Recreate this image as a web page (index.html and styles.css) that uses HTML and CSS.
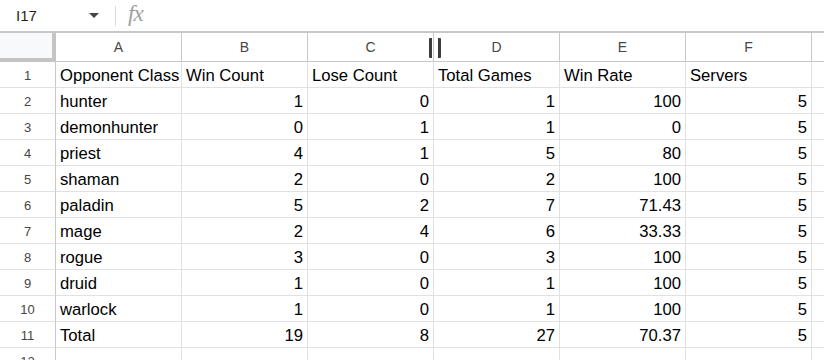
FILE: index.html
```html
<!DOCTYPE html>
<html>
<head>
<meta charset="utf-8">
<link rel="stylesheet" href="styles.css">
</head>
<body>
<div class="toolbar">
  <div class="namebox">I17</div>
  <svg class="caret" width="10" height="6" viewBox="0 0 10 6"><path d="M0 0h10L5 5z" fill="#444"/></svg>
  <div class="sep"></div>
  <div class="fx">fx</div>
</div>
<div class="sheet">
  <div class="corner"></div>
  <div class="ch">A</div><div class="ch">B</div><div class="ch handle-col">C<span class="handle"></span></div><div class="ch">D</div><div class="ch">E</div><div class="ch">F</div><div class="ch"></div>

  <div class="rh">1</div><div class="c">Opponent Class</div><div class="c">Win Count</div><div class="c">Lose Count</div><div class="c">Total Games</div><div class="c">Win Rate</div><div class="c">Servers</div><div class="c"></div>
  <div class="rh">2</div><div class="c">hunter</div><div class="c n">1</div><div class="c n">0</div><div class="c n">1</div><div class="c n">100</div><div class="c n">5</div><div class="c"></div>
  <div class="rh">3</div><div class="c">demonhunter</div><div class="c n">0</div><div class="c n">1</div><div class="c n">1</div><div class="c n">0</div><div class="c n">5</div><div class="c"></div>
  <div class="rh">4</div><div class="c">priest</div><div class="c n">4</div><div class="c n">1</div><div class="c n">5</div><div class="c n">80</div><div class="c n">5</div><div class="c"></div>
  <div class="rh">5</div><div class="c">shaman</div><div class="c n">2</div><div class="c n">0</div><div class="c n">2</div><div class="c n">100</div><div class="c n">5</div><div class="c"></div>
  <div class="rh">6</div><div class="c">paladin</div><div class="c n">5</div><div class="c n">2</div><div class="c n">7</div><div class="c n">71.43</div><div class="c n">5</div><div class="c"></div>
  <div class="rh">7</div><div class="c">mage</div><div class="c n">2</div><div class="c n">4</div><div class="c n">6</div><div class="c n">33.33</div><div class="c n">5</div><div class="c"></div>
  <div class="rh">8</div><div class="c">rogue</div><div class="c n">3</div><div class="c n">0</div><div class="c n">3</div><div class="c n">100</div><div class="c n">5</div><div class="c"></div>
  <div class="rh">9</div><div class="c">druid</div><div class="c n">1</div><div class="c n">0</div><div class="c n">1</div><div class="c n">100</div><div class="c n">5</div><div class="c"></div>
  <div class="rh">10</div><div class="c">warlock</div><div class="c n">1</div><div class="c n">0</div><div class="c n">1</div><div class="c n">100</div><div class="c n">5</div><div class="c"></div>
  <div class="rh">11</div><div class="c">Total</div><div class="c n">19</div><div class="c n">8</div><div class="c n">27</div><div class="c n">70.37</div><div class="c n">5</div><div class="c"></div>
  <div class="rh">12</div><div class="c"></div><div class="c"></div><div class="c"></div><div class="c"></div><div class="c"></div><div class="c"></div><div class="c"></div>
</div>
</body>
</html>
```
FILE: styles.css
```css
html, body {
  margin: 0;
  padding: 0;
  width: 824px;
  height: 360px;
  overflow: hidden;
  background: #fff;
  font-family: "Liberation Sans", Arial, sans-serif;
}
.toolbar {
  height: 31px;
  display: flex;
  align-items: center;
  border-bottom: 2px solid #c7c7c7;
  box-sizing: content-box;
}
.namebox {
  width: 73px;
  padding-left: 16px;
  font-size: 15px;
  color: #1f1f1f;
}
.caret {
  margin-top: 1px;
}
.sep {
  width: 1px;
  height: 20px;
  background: #dadce0;
  margin-left: 16px;
}
.fx {
  margin-left: 12px;
  font-family: "Liberation Serif", serif;
  font-style: italic;
  font-size: 23px;
  color: #a0a0a0;
  letter-spacing: -1px;
  margin-top: -3px;
}
.sheet {
  width: 824px;
  display: grid;
  grid-template-columns: 56px repeat(6, 126px) 1fr;
  grid-template-rows: 29px repeat(12, 26px);
}
.sheet > div {
  box-sizing: border-box;
  border-right: 1px solid #e1e1e1;
  border-bottom: 1px solid #e1e1e1;
  overflow: hidden;
  white-space: nowrap;
}
.sheet > div:nth-child(8n) {
  border-right: none;
}
.sheet > .corner {
  background: #f8f9fa;
  border-right: 4px solid #c4c4c4;
  border-bottom: 4px solid #c4c4c4;
}
.sheet > .ch {
  display: flex;
  align-items: center;
  justify-content: center;
  font-size: 14px;
  color: #444746;
  border-right-color: #c8c8c8;
  border-bottom-color: #c8c8c8;
  position: relative;
}
.sheet > .rh {
  display: flex;
  align-items: center;
  justify-content: center;
  font-size: 13px;
  color: #444746;
  border-right-color: #c8c8c8;
  padding-top: 2px;
}
.sheet > .c {
  display: flex;
  align-items: center;
  padding: 3px 4px 0 4px;
  font-size: 16.67px;
  color: #000;
}
.sheet > .c.n {
  justify-content: flex-end;
}
.handle {
  position: absolute;
  right: -8px;
  top: 5px;
  width: 12px;
  height: 20px;
  box-sizing: border-box;
  border-left: 3px solid #3c3c3c;
  border-right: 3px solid #3c3c3c;
  border-radius: 1px;
  z-index: 2;
}
.sheet > .handle-col {
  overflow: visible;
}
```
